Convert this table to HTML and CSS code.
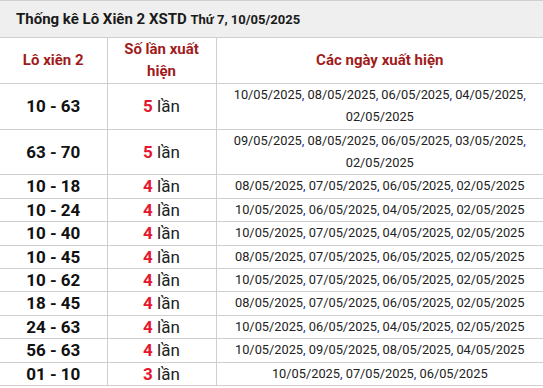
FILE: index.html
```html
<!DOCTYPE html>
<html lang="vi">
<head>
<meta charset="utf-8">
<link rel="stylesheet" href="styles.css">
</head>
<body>
<div class="box">
  <h2 class="title">Thống kê Lô Xiên 2 XSTD <span class="sub">Thứ 7, 10/05/2025</span></h2>
  <table class="stat">
    <colgroup><col class="c1"><col class="c2"><col class="c3"></colgroup>
    <thead>
      <tr><th>Lô xiên 2</th><th>Số lần xuất hiện</th><th>Các ngày xuất hiện</th></tr>
    </thead>
    <tbody>
      <tr><td class="pair">10 - 63</td><td class="cnt"><b>5</b> lần</td><td class="dates">10/05/2025<i>,</i> 08/05/2025<i>,</i> 06/05/2025<i>,</i> 04/05/2025<i>,</i> 02/05/2025</td></tr>
      <tr><td class="pair">63 - 70</td><td class="cnt"><b>5</b> lần</td><td class="dates">09/05/2025<i>,</i> 08/05/2025<i>,</i> 06/05/2025<i>,</i> 03/05/2025<i>,</i> 02/05/2025</td></tr>
      <tr><td class="pair">10 - 18</td><td class="cnt"><b>4</b> lần</td><td class="dates">08/05/2025<i>,</i> 07/05/2025<i>,</i> 06/05/2025<i>,</i> 02/05/2025</td></tr>
      <tr><td class="pair">10 - 24</td><td class="cnt"><b>4</b> lần</td><td class="dates">10/05/2025<i>,</i> 06/05/2025<i>,</i> 04/05/2025<i>,</i> 02/05/2025</td></tr>
      <tr><td class="pair">10 - 40</td><td class="cnt"><b>4</b> lần</td><td class="dates">10/05/2025<i>,</i> 07/05/2025<i>,</i> 04/05/2025<i>,</i> 02/05/2025</td></tr>
      <tr><td class="pair">10 - 45</td><td class="cnt"><b>4</b> lần</td><td class="dates">08/05/2025<i>,</i> 07/05/2025<i>,</i> 06/05/2025<i>,</i> 02/05/2025</td></tr>
      <tr><td class="pair">10 - 62</td><td class="cnt"><b>4</b> lần</td><td class="dates">10/05/2025<i>,</i> 07/05/2025<i>,</i> 06/05/2025<i>,</i> 02/05/2025</td></tr>
      <tr><td class="pair">18 - 45</td><td class="cnt"><b>4</b> lần</td><td class="dates">08/05/2025<i>,</i> 07/05/2025<i>,</i> 06/05/2025<i>,</i> 02/05/2025</td></tr>
      <tr><td class="pair">24 - 63</td><td class="cnt"><b>4</b> lần</td><td class="dates">10/05/2025<i>,</i> 06/05/2025<i>,</i> 04/05/2025<i>,</i> 02/05/2025</td></tr>
      <tr><td class="pair">56 - 63</td><td class="cnt"><b>4</b> lần</td><td class="dates">10/05/2025<i>,</i> 09/05/2025<i>,</i> 08/05/2025<i>,</i> 04/05/2025</td></tr>
      <tr><td class="pair">01 - 10</td><td class="cnt"><b>3</b> lần</td><td class="dates">10/05/2025<i>,</i> 07/05/2025<i>,</i> 06/05/2025</td></tr>
    </tbody>
  </table>
</div>
</body>
</html>
```
FILE: styles.css
```css
html, body {
  margin: 0;
  padding: 0;
  background: #fff;
}
body {
  font-family: Roboto, "Noto Sans", Arial, sans-serif;
  color: #222;
}
.box {
  width: 543px;
}
.title {
  margin: 0;
  height: 36px;
  line-height: 36px;
  padding-left: 16px;
  background: #efefef;
  border-top: 1px solid #cfcfcf;
  border-bottom: 1px solid #cfcfcf;
  font-size: 15px;
  font-weight: 700;
  color: #1a1a1a;
}
.title .sub {
  font-size: 13px;
}
.stat {
  width: 543px;
  border-collapse: collapse;
  table-layout: fixed;
}
.c1 { width: 107px; }
.c2 { width: 109px; }
.stat th, .stat td {
  border: 1px solid #cfcfcf;
  padding: 0 8px;
  text-align: center;
  vertical-align: middle;
  line-height: 22.4px;
}
.stat tr > :first-child { border-left: none; }
.stat tr > :last-child { border-right: none; }
.stat thead th {
  border-top: none;
  font-size: 15px;
  font-weight: 700;
  color: #a01c1c;
}
.pair {
  font-size: 17px;
  font-weight: 700;
  color: #111;
}
.cnt {
  font-size: 17px;
  color: #222;
}
.cnt b {
  color: #e5162d;
  font-weight: 700;
}
.dates {
  font-size: 12.8px;
  color: #222;
}
.dates i {
  font-style: normal;
  color: #2b2ba0;
}
```
